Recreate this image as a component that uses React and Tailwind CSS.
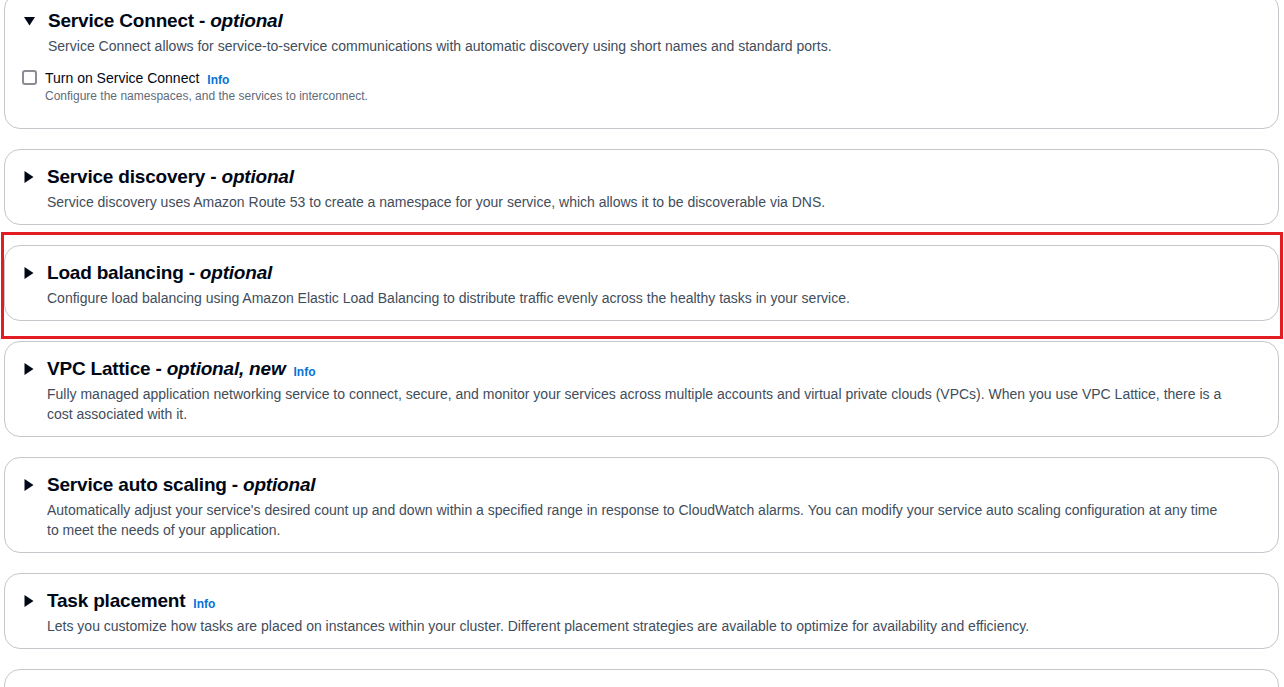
import { useState } from "react";

function Caret({ open }) {
  if (open) {
    return (
      <svg width="11" height="9" viewBox="0 0 11 9" className="mt-[8px] shrink-0">
        <path d="M0 0 H11 L5.5 8.5 Z" fill="#000716" />
      </svg>
    );
  }
  return (
    <svg width="10" height="12" viewBox="0 0 10 12" className="mt-[6px] shrink-0">
      <path d="M0.5 0 L9.5 6 L0.5 12 Z" fill="#000716" />
    </svg>
  );
}

function Info() {
  return <span className="ml-[8px] text-[12px] font-bold leading-4 text-[#0972d3] tracking-normal align-[-1px]">Info</span>;
}

function Section({ title, optional, info, open, description, children, highlight }) {
  return (
    <div className="relative">
      <div className="rounded-[16px] border border-[#c6c6cd] bg-white pl-[19px] pr-[52px] pt-[15px] pb-[12px]">
        <div className="flex">
          <Caret open={open} />
          <div className="ml-[13px] min-w-0 flex-1">
            <h2 className="text-[19px] font-bold leading-6 tracking-[-0.2px] text-[#000716]">
              {title}
              {optional && (
                <>
                  {" - "}
                  <i>{optional}</i>
                </>
              )}
              {info && <Info />}
            </h2>
            <p className="mt-[3px] text-[14px] leading-5 text-[#414d5c]">{description}</p>
          </div>
        </div>
        {children}
      </div>
      {highlight && (
        <div className="pointer-events-none absolute -top-[13px] -bottom-[18px] -left-[3px] -right-[4px] border-[3px] border-[#e31b23]" />
      )}
    </div>
  );
}

export default function App() {
  const [connect, setConnect] = useState(false);

  return (
    <div className="h-[687px] overflow-hidden bg-white pl-[4px] pr-[5px] font-['Liberation_Sans',Arial,sans-serif]">
      <div className="-mt-[7px] flex flex-col gap-[20px]">
        <Section
          title="Service Connect"
          optional="optional"
          open
          description="Service Connect allows for service-to-service communications with automatic discovery using short names and standard ports."
        >
          <div className="mt-[12px] pb-[12px] -ml-[2px]">
            <label className="flex cursor-pointer items-start">
              <input
                type="checkbox"
                checked={connect}
                onChange={(e) => setConnect(e.target.checked)}
                className="mt-[2px] h-[15px] w-[15px] shrink-0 appearance-none rounded-[3px] border-2 border-[#8c8c94] bg-white"
              />
              <div className="ml-[8px]">
                <div className="text-[14px] leading-5 text-[#000716]">
                  Turn on Service Connect
                  <Info />
                </div>
                <div className="text-[12px] leading-4 text-[#5f6b7a]">
                  Configure the namespaces, and the services to interconnect.
                </div>
              </div>
            </label>
          </div>
        </Section>
        <Section
          title="Service discovery"
          optional="optional"
          description="Service discovery uses Amazon Route 53 to create a namespace for your service, which allows it to be discoverable via DNS."
        />
        <Section
          title="Load balancing"
          optional="optional"
          highlight
          description="Configure load balancing using Amazon Elastic Load Balancing to distribute traffic evenly across the healthy tasks in your service."
        />
        <Section
          title="VPC Lattice"
          optional="optional, new"
          info
          description="Fully managed application networking service to connect, secure, and monitor your services across multiple accounts and virtual private clouds (VPCs). When you use VPC Lattice, there is a cost associated with it."
        />
        <Section
          title="Service auto scaling"
          optional="optional"
          description="Automatically adjust your service's desired count up and down within a specified range in response to CloudWatch alarms. You can modify your service auto scaling configuration at any time to meet the needs of your application."
        />
        <Section
          title="Task placement"
          info
          description="Lets you customize how tasks are placed on instances within your cluster. Different placement strategies are available to optimize for availability and efficiency."
        />
        <div className="h-[60px] rounded-[16px] border border-[#c6c6cd] bg-white" />
      </div>
    </div>
  );
}
